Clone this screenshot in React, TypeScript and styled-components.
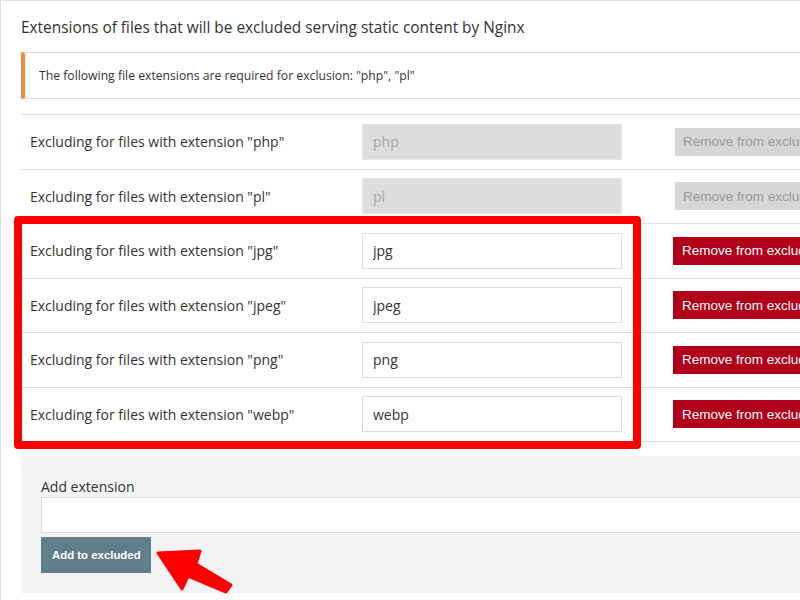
import React from 'react';
import styled, { createGlobalStyle } from 'styled-components';

const GlobalStyle = createGlobalStyle`
  html, body {
    margin: 0;
    padding: 0;
    background: #fff;
  }
  body {
    font-family: 'Open Sans', 'DejaVu Sans', sans-serif;
    color: #333;
  }
`;

const Viewport = styled.div`
  position: relative;
  width: 800px;
  height: 600px;
  overflow: hidden;
`;

const Panel = styled.section`
  width: 920px;
  height: 600px;
  box-sizing: border-box;
  border-top: 1px solid #dedede;
  border-left: 1px solid #dedede;
  padding-left: 20px;
`;

const Title = styled.h2`
  margin: 0;
  padding: 17px 0 14px;
  font-size: 15.4px;
  line-height: 20px;
  font-weight: 400;
  color: #333;
`;

const Notice = styled.div`
  box-sizing: border-box;
  height: 47px;
  display: flex;
  align-items: center;
  padding-left: 14px;
  border-top: 1px solid #dcdcdc;
  border-bottom: 1px solid #dcdcdc;
  border-left: 4px solid #f58b3e;
  font-size: 12.2px;
  color: #333;
`;

const Table = styled.div`
  margin-top: 15px;
  border-top: 1px solid #dedede;
`;

const Row = styled.div`
  box-sizing: border-box;
  height: 54.5px;
  display: grid;
  grid-template-columns: 341px 260px auto;
  align-items: center;
  border-bottom: 1px solid #dedede;
`;

const Label = styled.span`
  padding-left: 9px;
  font-size: 14px;
  color: #333;
`;

const ExtInput = styled.input<{ $locked?: boolean }>`
  box-sizing: border-box;
  width: 260px;
  height: 36px;
  padding: 0 10px;
  border: 1px solid ${(p) => (p.$locked ? '#e6e6e6' : '#dcdcdc')};
  background: ${(p) => (p.$locked ? '#dddddd' : '#fff')};
  color: ${(p) => (p.$locked ? '#a8a8a8' : '#333')};
  font-family: 'Open Sans', sans-serif;
  font-size: 14px;
  outline: none;
`;

const RemoveButton = styled.button<{ $locked?: boolean }>`
  justify-self: start;
  margin-left: ${(p) => (p.$locked ? '53px' : '51px')};
  height: 28px;
  padding: 0 8px 0 ${(p) => (p.$locked ? '8px' : '9px')};
  border: none;
  border-radius: 0;
  background: ${(p) => (p.$locked ? '#d6d6d6' : '#b0001a')};
  color: ${(p) => (p.$locked ? '#9a9a9a' : '#fff')};
  font-family: 'Liberation Sans', Arial, sans-serif;
  font-size: 13.5px;
  white-space: nowrap;
`;

const AddBox = styled.div`
  margin-top: 14px;
  height: 137px;
  box-sizing: border-box;
  background: #f3f3f3;
  padding: 21px 0 20px 20px;
  display: flex;
  flex-direction: column;
  align-items: flex-start;
`;

const AddLabel = styled.label`
  font-size: 14px;
  line-height: 20px;
  color: #333;
`;

const AddInput = styled.input`
  box-sizing: border-box;
  width: 100%;
  height: 36px;
  border: 1px solid #dcdcdc;
  background: #fff;
  outline: none;
`;

const AddButton = styled.button`
  margin-top: 4px;
  height: 36px;
  padding: 0 10px 0 11px;
  border: none;
  background: #607d8b;
  color: #fff;
  font-family: 'Liberation Sans', Arial, sans-serif;
  font-size: 11.4px;
  font-weight: 700;
`;

const Highlight = styled.div`
  position: absolute;
  left: 14px;
  top: 216px;
  width: 627px;
  height: 233px;
  box-sizing: border-box;
  border: 8px solid #ff0000;
  border-radius: 4px;
  pointer-events: none;
`;

const Arrow = styled.svg`
  position: absolute;
  left: 150px;
  top: 540px;
`;

const rows = [
  { ext: 'php', locked: true },
  { ext: 'pl', locked: true },
  { ext: 'jpg' },
  { ext: 'jpeg' },
  { ext: 'png' },
  { ext: 'webp' },
];

export default function App() {
  return (
    <Viewport>
      <GlobalStyle />
      <Panel>
        <Title>Extensions of files that will be excluded serving static content by Nginx</Title>
        <Notice>The following file extensions are required for exclusion: "php", "pl"</Notice>
        <Table>
          {rows.map((r) => (
            <Row key={r.ext}>
              <Label>Excluding for files with extension "{r.ext}"</Label>
              <ExtInput $locked={r.locked} defaultValue={r.ext} readOnly={r.locked} />
              <RemoveButton $locked={r.locked}>Remove from excluded</RemoveButton>
            </Row>
          ))}
        </Table>
        <AddBox>
          <AddLabel>Add extension</AddLabel>
          <AddInput />
          <AddButton>Add to excluded</AddButton>
        </AddBox>
      </Panel>
      <Highlight />
      <Arrow width="90" height="60" viewBox="150 540 90 60">
        <polygon
          points="158,553 200,551 196,564 231,585 226,592 188,576 182,589"
          fill="#ff0000"
          stroke="#ff0000"
          strokeWidth="3"
          strokeLinejoin="round"
        />
      </Arrow>
    </Viewport>
  );
}
